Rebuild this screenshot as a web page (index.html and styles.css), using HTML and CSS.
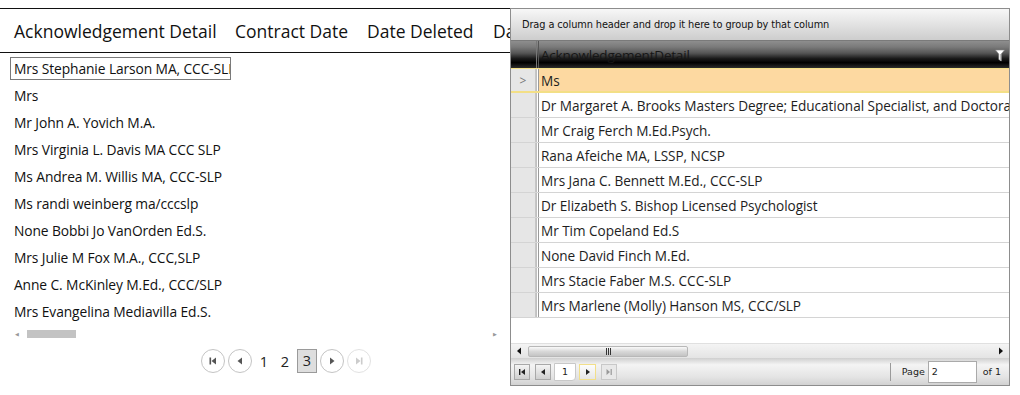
FILE: index.html
```html
<!DOCTYPE html>
<html lang="en">
<head>
    <meta charset="UTF-8">
    <title>Grid Comparison</title>
    <link rel="stylesheet" href="styles.css">
</head>
<body>
    <div class="page">
        <!-- Left: plain list grid -->
        <div class="list-grid">
            <div class="list-head">
                <span class="head-cell w1">Acknowledgement Detail</span>
                <span class="head-cell w2">Contract Date</span>
                <span class="head-cell w3">Date Deleted</span>
                <span class="head-cell w4">Date</span>
            </div>
            <div class="list-body">
                <div class="list-row"><span class="cell-edit">Mrs Stephanie Larson MA, CCC-SLP</span></div>
                <div class="list-row">Mrs</div>
                <div class="list-row">Mr John A. Yovich M.A.</div>
                <div class="list-row">Mrs Virginia L. Davis MA CCC SLP</div>
                <div class="list-row">Ms Andrea M. Willis MA, CCC-SLP</div>
                <div class="list-row">Ms randi weinberg ma/cccslp</div>
                <div class="list-row">None Bobbi Jo VanOrden Ed.S.</div>
                <div class="list-row">Mrs Julie M Fox M.A., CCC,SLP</div>
                <div class="list-row">Anne C. McKinley M.Ed., CCC/SLP</div>
                <div class="list-row">Mrs Evangelina Mediavilla Ed.S.</div>
            </div>
            <div class="thin-scroll">
                <span class="thin-arrow">&#9664;</span>
                <span class="thin-thumb"></span>
                <span class="thin-space"></span>
                <span class="thin-arrow">&#9654;</span>
            </div>
            <div class="round-pager">
                <span class="circle-btn">
                    <svg width="10" height="10" viewBox="0 0 10 10"><rect x="1.5" y="1.5" width="1.6" height="7" fill="#555"/><path d="M8 1.5 L3.5 5 L8 8.5 Z" fill="#555"/></svg>
                </span>
                <span class="circle-btn">
                    <svg width="10" height="10" viewBox="0 0 10 10"><path d="M7 1.5 L2.5 5 L7 8.5 Z" fill="#555"/></svg>
                </span>
                <span class="page-num">1</span>
                <span class="page-num">2</span>
                <span class="page-num current">3</span>
                <span class="circle-btn">
                    <svg width="10" height="10" viewBox="0 0 10 10"><path d="M3 1.5 L7.5 5 L3 8.5 Z" fill="#555"/></svg>
                </span>
                <span class="circle-btn disabled">
                    <svg width="10" height="10" viewBox="0 0 10 10"><path d="M2 1.5 L6.5 5 L2 8.5 Z" fill="#ccc"/><rect x="6.9" y="1.5" width="1.6" height="7" fill="#ccc"/></svg>
                </span>
            </div>
        </div>

        <!-- Right: rich grid with grouping panel -->
        <div class="rich-grid">
            <div class="group-panel">Drag a column header and drop it here to group by that column</div>
            <div class="rich-head">
                <span class="ind-cell"></span>
                <span class="split"></span>
                <span class="rich-head-cell">AcknowledgementDetail</span>
                <svg class="filter-icon" width="10" height="13" viewBox="0 0 10 13"><path d="M0.5 1 L9.5 1 L6.2 5 L6.2 12 L3.8 10.5 L3.8 5 Z" fill="#fff" stroke="#888" stroke-width="0.6"/><path d="M6.2 5 L6.2 12 L5 11.3 L5 5 Z" fill="#bbb"/></svg>
            </div>
            <div class="rich-body">
                <div class="rich-row selected"><span class="ind-cell">&gt;</span><span class="split"></span><span class="rich-cell">Ms</span></div>
                <div class="rich-row"><span class="ind-cell"></span><span class="split"></span><span class="rich-cell">Dr Margaret A. Brooks Masters Degree; Educational Specialist, and Doctorate</span></div>
                <div class="rich-row"><span class="ind-cell"></span><span class="split"></span><span class="rich-cell">Mr Craig Ferch M.Ed.Psych.</span></div>
                <div class="rich-row"><span class="ind-cell"></span><span class="split"></span><span class="rich-cell">Rana Afeiche MA, LSSP, NCSP</span></div>
                <div class="rich-row"><span class="ind-cell"></span><span class="split"></span><span class="rich-cell">Mrs Jana C. Bennett M.Ed., CCC-SLP</span></div>
                <div class="rich-row"><span class="ind-cell"></span><span class="split"></span><span class="rich-cell">Dr Elizabeth S. Bishop Licensed Psychologist</span></div>
                <div class="rich-row"><span class="ind-cell"></span><span class="split"></span><span class="rich-cell">Mr Tim Copeland Ed.S</span></div>
                <div class="rich-row"><span class="ind-cell"></span><span class="split"></span><span class="rich-cell">None David Finch M.Ed.</span></div>
                <div class="rich-row"><span class="ind-cell"></span><span class="split"></span><span class="rich-cell">Mrs Stacie Faber M.S. CCC-SLP</span></div>
                <div class="rich-row"><span class="ind-cell"></span><span class="split"></span><span class="rich-cell">Mrs Marlene (Molly) Hanson MS, CCC/SLP</span></div>
            </div>
            <div class="hscroll">
                <span class="hs-arrow">
                    <svg width="6" height="8" viewBox="0 0 6 8"><path d="M5 0.5 L1 4 L5 7.5 Z" fill="#111"/></svg>
                </span>
                <span class="hs-thumb"><span class="grip"></span></span>
                <span class="hs-track"></span>
                <span class="hs-arrow">
                    <svg width="6" height="8" viewBox="0 0 6 8"><path d="M1 0.5 L5 4 L1 7.5 Z" fill="#111"/></svg>
                </span>
            </div>
            <div class="pager-bar">
                <span class="sq-btn">
                    <svg width="8" height="8" viewBox="0 0 8 8"><rect x="1" y="1" width="1.4" height="6" fill="#222"/><path d="M7 1 L3 4 L7 7 Z" fill="#222"/></svg>
                </span>
                <span class="sq-btn">
                    <svg width="8" height="8" viewBox="0 0 8 8"><path d="M6 1 L2 4 L6 7 Z" fill="#222"/></svg>
                </span>
                <span class="num-box">1</span>
                <span class="sq-btn hover">
                    <svg width="8" height="8" viewBox="0 0 8 8"><path d="M2 1 L6 4 L2 7 Z" fill="#222"/></svg>
                </span>
                <span class="sq-btn disabled">
                    <svg width="8" height="8" viewBox="0 0 8 8"><path d="M1.5 1 L5 4 L1.5 7 Z" fill="#999"/><rect x="5.6" y="1" width="1.2" height="6" fill="#999"/></svg>
                </span>
                <span class="pager-fill"></span>
                <span class="pager-sep"></span>
                <span class="pager-label">Page</span>
                <span class="page-input">2</span>
                <span class="pager-label">of 1</span>
            </div>
        </div>
    </div>
</body>
</html>
```

FILE: styles.css
```css
/* Page frame */
body {
    margin: 0;
    background: #fff;
    font-family: 'Open Sans', 'Noto Sans', sans-serif;
    color: #111;
}

.page {
    display: flex;
    width: 1020px;
    height: 395px;
    overflow: hidden;
}

/* Left list grid */
.list-grid {
    flex: none;
    width: 510px;
    padding-top: 8px;
    overflow: hidden;
}

.list-head {
    display: flex;
    align-items: center;
    height: 45px;
    padding-top: 1px;
    border-top: 1px solid #111;
    border-bottom: 1px solid #111;
    box-sizing: border-box;
    white-space: nowrap;
    font-size: 17.5px;
    color: #111;
}

.head-cell {
    flex: none;
    padding-left: 14px;
}

.head-cell.w1 { width: 207px; }
.head-cell.w2 { width: 118px; }
.head-cell.w3 { width: 112px; }
.head-cell.w4 {
    width: 17px;
    overflow: hidden;
}

.list-body {
    padding-top: 2px;
}

.list-row {
    height: 27px;
    display: flex;
    align-items: center;
    padding-left: 14px;
    font-size: 13.8px;
    letter-spacing: -0.1px;
    white-space: nowrap;
}

.cell-edit {
    display: block;
    width: 221px;
    height: 23px;
    line-height: 21px;
    margin-left: -4px;
    padding-left: 3px;
    border: 1px solid #7a7a7a;
    box-sizing: border-box;
    overflow: hidden;
}

.thin-scroll {
    display: flex;
    align-items: center;
    height: 10px;
    margin-top: 4px;
    padding: 0 5px 0 15px;
}

.thin-arrow {
    font-size: 5px;
    color: #999;
    width: 12px;
}

.thin-thumb {
    width: 49px;
    height: 8px;
    background: #c3c3c3;
}

.thin-space {
    flex: 1;
}

.round-pager {
    display: flex;
    align-items: center;
    justify-content: center;
    gap: 3px;
    margin-top: 10px;
    padding-left: 62px;
}

.circle-btn {
    width: 22px;
    height: 22px;
    border: 1px solid #c4c4c4;
    border-radius: 50%;
    display: flex;
    align-items: center;
    justify-content: center;
}

.circle-btn.disabled {
    border-color: #e2e2e2;
}

.page-num {
    width: 18px;
    text-align: center;
    font-size: 14.5px;
    color: #222;
}

.page-num.current {
    height: 22px;
    line-height: 22px;
    background: #dedede;
    border: 1px solid #9a9a9a;
}

/* Right rich grid */
.rich-grid {
    flex: none;
    width: 500px;
    height: 378px;
    margin-top: 8px;
    border: 1px solid #8d8d8d;
    box-sizing: border-box;
    display: flex;
    flex-direction: column;
    background: #fff;
    overflow: hidden;
}

.group-panel {
    height: 31px;
    flex: none;
    display: flex;
    align-items: center;
    padding-left: 11px;
    font-family: 'DejaVu Sans', Verdana, sans-serif;
    font-size: 9.8px;
    letter-spacing: -0.1px;
    color: #111;
    background: linear-gradient(#f7f7f7, #e2e2e2 50%, #cdcdcd);
    border-bottom: 1px solid #7a7a7a;
}

.rich-head {
    height: 27px;
    flex: none;
    display: flex;
    align-items: stretch;
    background: linear-gradient(#8e8e8e 0%, #7a7a7a 22%, #555 45%, #1a1a1a 65%, #000 80%, #2c2c2c 100%);
    position: relative;
}

.rich-head .ind-cell {
    background: transparent;
    border: none;
}

.rich-head .split {
    border-left-color: #777;
    border-right-color: #555;
}

.rich-head-cell {
    display: flex;
    align-items: center;
    padding: 0 0 0 2px;
    font-size: 13.5px;
    letter-spacing: -0.2px;
    color: #161616;
    white-space: nowrap;
}

.filter-icon {
    position: absolute;
    right: 4px;
    top: 8px;
}

.ind-cell {
    flex: none;
    width: 25px;
    display: flex;
    align-items: center;
    justify-content: center;
    background: #e6e6e6;
    border-right: 1px solid #c6c6c6;
    box-sizing: border-box;
    color: #777;
    font-size: 12px;
}

.split {
    flex: none;
    width: 1px;
    border-left: 1px solid #c0c0c0;
    border-right: 1px solid #9a9a9a;
}

.rich-body {
    height: 275px;
    flex: none;
}

.rich-row {
    display: flex;
    height: 25px;
    box-sizing: border-box;
    border-bottom: 1px solid #d4d4d4;
}

.rich-cell {
    display: flex;
    align-items: center;
    padding-left: 2px;
    font-size: 13.6px;
    letter-spacing: -0.05px;
    color: #1e1e1e;
    white-space: nowrap;
    background: #fff;
    flex: 1;
}

.rich-row.selected {
    border-top: 1px solid #f3df86;
    border-bottom: 2px solid #f3df86;
}

.rich-row.selected .rich-cell {
    background: #fdd9a1;
}

/* Horizontal scroll bar */
.hscroll {
    height: 14px;
    flex: none;
    display: flex;
    align-items: center;
    background: linear-gradient(#f4f4f4, #e4e4e4);
    border-top: 1px solid #e0e0e0;
}

.hs-arrow {
    width: 16px;
    display: flex;
    justify-content: center;
}

.hs-thumb {
    width: 160px;
    height: 11px;
    margin-left: 1px;
    border: 1px solid #b8b8b8;
    border-radius: 2px;
    box-sizing: border-box;
    background: linear-gradient(#fafafa, #d8d8d8 50%, #c4c4c4);
    display: flex;
    justify-content: center;
    align-items: center;
}

.grip {
    width: 5px;
    height: 7px;
    border-left: 1px solid #333;
    border-right: 1px solid #333;
    box-sizing: border-box;
    background: linear-gradient(90deg, transparent 40%, #333 40%, #333 60%, transparent 60%);
}

.hs-track {
    flex: 1;
}

/* Pager bar */
.pager-bar {
    flex: 1;
    display: flex;
    align-items: center;
    gap: 5px;
    padding: 0 8px 0 3px;
    background: linear-gradient(#cfcfcf, #f4f4f4 25%, #e4e4e4 70%, #d2d2d2);
    font-family: 'DejaVu Sans', Verdana, sans-serif;
    font-size: 9.5px;
    color: #222;
}

.sq-btn {
    width: 16px;
    height: 16px;
    box-sizing: border-box;
    border: 1px solid #a8a8a8;
    background: linear-gradient(#f4f4f4, #cfcfcf);
    display: flex;
    align-items: center;
    justify-content: center;
}

.sq-btn.hover {
    width: 17px;
    border-color: #f2df8a;
    background: linear-gradient(#fdfdfd, #e6e6e6);
}

.sq-btn.disabled {
    background: #e8e8e8;
    border-color: #c8c8c8;
}

.num-box {
    width: 22px;
    height: 18px;
    box-sizing: border-box;
    border: 1px solid #c8c8c8;
    border-radius: 0 0 4px 0;
    background: #fff;
    text-align: center;
    line-height: 16px;
    margin: 0 -2px;
}

.pager-fill {
    flex: 1;
}

.pager-sep {
    width: 1px;
    height: 18px;
    background: #9a9a9a;
    margin-right: 6px;
}

.page-input {
    width: 49px;
    height: 22px;
    box-sizing: border-box;
    border: 1px solid #aaa;
    background: #fff;
    line-height: 20px;
    padding-left: 3px;
    margin: 0 1px 0 -2px;
}
```
